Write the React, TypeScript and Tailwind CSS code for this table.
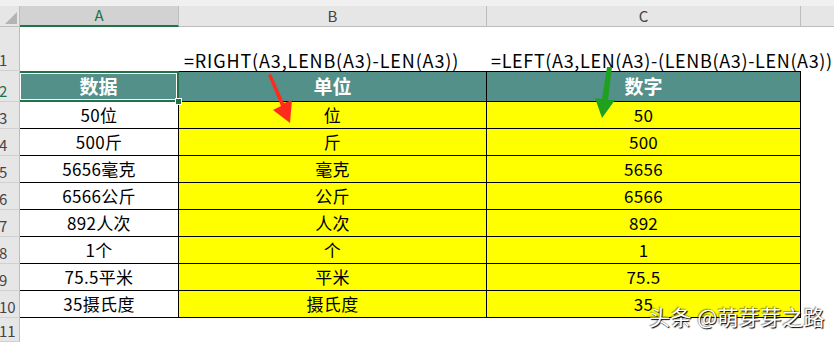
import React from "react";

const font = { fontFamily: '"Noto Sans CJK SC", "Liberation Sans", sans-serif' };

type Row = { a: string; b: string; c: string };

const rows: Row[] = [
  { a: "50位", b: "位", c: "50" },
  { a: "500斤", b: "斤", c: "500" },
  { a: "5656毫克", b: "毫克", c: "5656" },
  { a: "6566公斤", b: "公斤", c: "6566" },
  { a: "892人次", b: "人次", c: "892" },
  { a: "1个", b: "个", c: "1" },
  { a: "75.5平米", b: "平米", c: "75.5" },
  { a: "35摄氏度", b: "摄氏度", c: "35" },
];

function RowHead({ n, h, active }: { n: number; h: string; active?: boolean }) {
  return (
    <div
      className={`${h} w-[20px] shrink-0 bg-[#e6e6e6] border-r border-[#bdbdbd] border-b border-b-[#d0d0d0] flex items-end text-[15px] leading-none pb-[3px] overflow-hidden ${
        active ? "text-[#217346]" : "text-[#444]"
      }`}
    >
      <span className="-ml-[1px]">{n}</span>
    </div>
  );
}

export default function App() {
  return (
    <div className="relative w-[834px] h-[342px] overflow-hidden bg-white" style={font}>
      {/* top strip */}
      <div className="h-[6px] bg-[#f0f0f0]" />

      {/* column headers */}
      <div className="flex h-[21px]">
        <div className="w-[20px] shrink-0 bg-[#e6e6e6] border-r border-[#bdbdbd] border-b border-b-[#bdbdbd] relative">
          <div className="absolute right-[2px] bottom-[2px] w-0 h-0 border-l-[12px] border-l-transparent border-b-[12px] border-b-[#b4b4b4]" />
        </div>
        <div className="w-[159px] shrink-0 bg-[#d2d2d2] border-r border-[#bdbdbd] border-b-2 border-b-[#217346] flex items-center justify-center text-[15px] text-[#217346]">
          A
        </div>
        <div className="w-[308px] shrink-0 bg-[#e6e6e6] border-r border-[#bdbdbd] border-b border-b-[#bdbdbd] flex items-center justify-center text-[15px] text-[#444]">
          B
        </div>
        <div className="w-[314px] shrink-0 bg-[#e6e6e6] border-r border-[#bdbdbd] border-b border-b-[#bdbdbd] flex items-center justify-center text-[15px] text-[#444]">
          C
        </div>
        <div className="flex-1 bg-[#e6e6e6] border-b border-b-[#bdbdbd]" />
      </div>

      {/* row 1: formulas */}
      <div className="flex h-[44px]">
        <RowHead n={1} h="h-[44px]" />
        <div className="w-[159px] shrink-0" />
        <div className="w-[308px] shrink-0 flex items-end pl-[5px] pb-[2px] text-[18px] tracking-[0.85px] leading-none whitespace-nowrap text-black">
          =RIGHT(A3,LENB(A3)-LEN(A3))
        </div>
        <div className="flex-1 flex items-end pl-[4px] pb-[2px] text-[18px] tracking-[0.65px] leading-none whitespace-nowrap text-black overflow-visible">
          =LEFT(A3,LEN(A3)-(LENB(A3)-LEN(A3))
        </div>
      </div>

      {/* row 2: headings */}
      <div className="flex h-[31px]">
        <RowHead n={2} h="h-[31px]" active />
        <div className="relative w-[159px] shrink-0 bg-[#54908a] border-y-2 border-[#217346] border-l-0 border-r-2 flex items-center justify-center">
          <div className="absolute inset-0 border border-white" />
          <span className="text-[19px] font-bold text-white">数据</span>
          <div className="absolute -right-[5px] -bottom-[5px] w-[7px] h-[7px] bg-[#217346] border border-white z-10" />
        </div>
        <div className="w-[308px] shrink-0 bg-[#54908a] border-y border-r border-black flex items-center justify-center text-[19px] font-bold text-white">
          单位
        </div>
        <div className="w-[314px] shrink-0 bg-[#54908a] border-y border-r border-black flex items-center justify-center text-[19px] font-bold text-white">
          数字
        </div>
        <div className="flex-1" />
      </div>

      {/* data rows */}
      {rows.map((r, i) => (
        <div key={i} className="flex h-[27px]">
          <RowHead n={i + 3} h="h-[27px]" />
          <div className="w-[159px] shrink-0 border-b border-r border-black flex items-center justify-center text-[17px] tracking-[0.3px] text-black">
            {r.a}
          </div>
          <div className="w-[308px] shrink-0 bg-[#ffff00] border-b border-r border-black flex items-center justify-center text-[17px] tracking-[0.3px] text-black">
            {r.b}
          </div>
          <div className="w-[314px] shrink-0 bg-[#ffff00] border-b border-r border-black flex items-center justify-center text-[17px] tracking-[0.3px] text-black">
            {r.c}
          </div>
          <div className="flex-1" />
        </div>
      ))}

      {/* row 11 */}
      <div className="flex h-[24px]">
        <RowHead n={11} h="h-[24px]" />
        <div className="flex-1" />
      </div>

      {/* annotation arrows */}
      <svg className="absolute left-0 top-0 pointer-events-none" width="834" height="342">
        <polygon points="268,75 271,74 284,103 292,100 290,123 273,110 281,106" fill="#ff2a1a" />
        <polygon points="607,67 612,67 608,100 615,100 602,118 595,98 602,99" fill="#1fa01f" />
      </svg>

      {/* watermark */}
      <div className="absolute left-[649px] top-[306px] text-[21px] tracking-[0.5px] leading-none text-white whitespace-nowrap [text-shadow:1px_1px_1px_#000,-1px_-1px_1px_rgba(0,0,0,0.4)]">
        头条 @萌芽芽之路
      </div>
    </div>
  );
}
